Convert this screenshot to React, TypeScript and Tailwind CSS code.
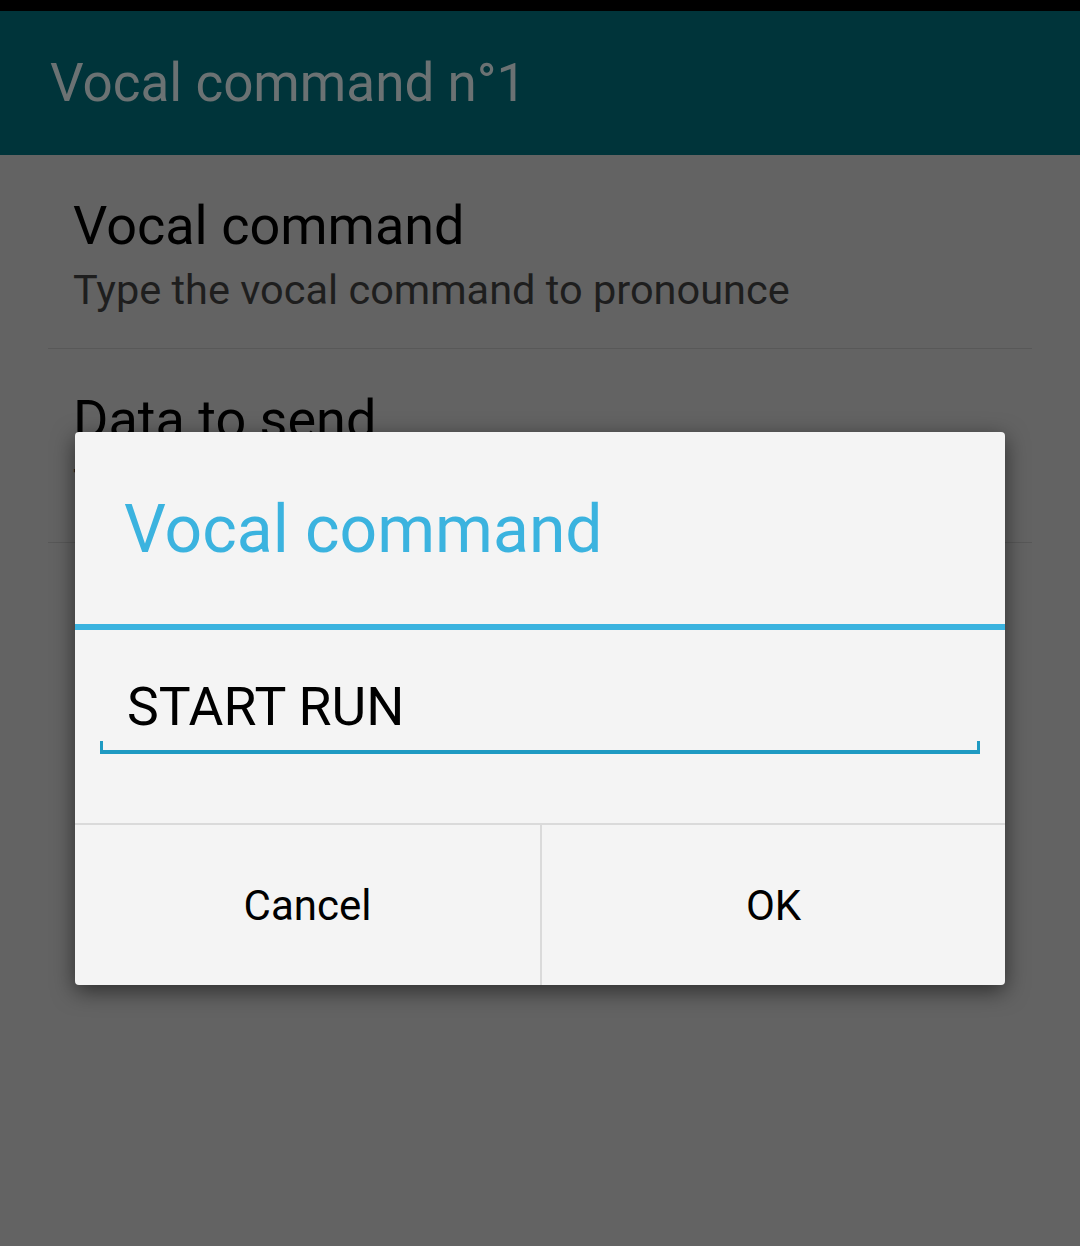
export default function App() {
  return (
    <main className="relative h-[1246px] w-[1080px] overflow-hidden bg-[#636363] font-['Roboto',sans-serif]">
      <div className="h-[11px] bg-black" />
      <header className="flex h-[144px] items-center bg-[#00343a] pl-[50px]">
        <h1 className="text-[53px] leading-none text-[#6b7273]">Vocal command n°1</h1>
      </header>

      <div className="px-[48px]">
        <div className="border-b border-[#585858] pb-[33px] pl-[25px] pt-[39px]">
          <p className="text-[54px] leading-[64px] text-black">Vocal command</p>
          <p className="mt-[7px] text-[41.5px] leading-[50px] text-[#1e1e1e]">
            Type the vocal command to pronounce
          </p>
        </div>
        <div className="border-b border-[#585858] pb-[33px] pl-[25px] pt-[39px]">
          <p className="text-[54px] leading-[64px] text-black">Data to send</p>
          <p className="mt-[7px] text-[41.5px] leading-[50px] text-[#1e1e1e]">
            Type the data to send
          </p>
        </div>
      </div>

      <div className="absolute left-[75px] top-[432px] w-[930px] overflow-hidden rounded-[4px] bg-[#f4f4f4] shadow-[0_6px_22px_rgba(0,0,0,0.55)]">
        <div className="flex h-[192px] items-center pl-[49px] pt-[4px]">
          <h2 className="text-[66px] leading-none text-[#3bb3df]">Vocal command</h2>
        </div>
        <div className="h-[6px] bg-[#3bb3df]" />
        <div className="h-[193px] px-[25px] pt-[46px]">
          <div className="relative">
            <input
              readOnly
              value="START RUN"
              className="box-border h-[74px] w-full bg-transparent pb-[14px] pl-[27px] text-[53.5px] leading-none text-black outline-none"
            />
            <div className="h-[4px] bg-[#1f9ac2]" />
            <span className="absolute bottom-0 left-0 h-[13px] w-[3px] bg-[#1f9ac2]" />
            <span className="absolute bottom-0 right-0 h-[13px] w-[3px] bg-[#1f9ac2]" />
          </div>
        </div>
        <div className="grid h-[162px] grid-cols-2 border-t-2 border-[#dadada]">
          <button type="button" className="text-[42px] text-black">
            Cancel
          </button>
          <button type="button" className="border-l-2 border-[#dadada] text-[42px] text-black">
            OK
          </button>
        </div>
      </div>
    </main>
  )
}
